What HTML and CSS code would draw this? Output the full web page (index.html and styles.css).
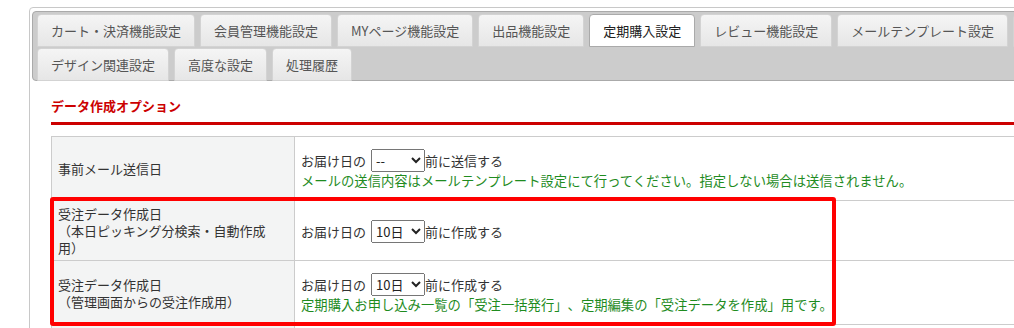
FILE: index.html
```html
<!DOCTYPE html>
<html lang="ja">
<head>
<meta charset="utf-8">
<title>定期購入設定</title>
<link rel="stylesheet" href="styles.css">
</head>
<body>
<div class="tabs">
  <ul class="nav">
    <li>カート・決済機能設定</li>
    <li>会員管理機能設定</li>
    <li>MYページ機能設定</li>
    <li>出品機能設定</li>
    <li class="active">定期購入設定</li>
    <li>レビュー機能設定</li>
    <li>メールテンプレート設定</li>
    <li>ポイント機能設定</li>
    <li>デザイン関連設定</li>
    <li>高度な設定</li>
    <li>処理履歴</li>
  </ul>
  <div class="panel">
    <h3 class="sec-title">データ作成オプション</h3>
    <div class="tbl-wrap">
      <table class="form">
        <colgroup><col class="c1"><col class="c2"></colgroup>
        <tr>
          <th>事前メール送信日</th>
          <td>
            <div class="line">お届け日の<select class="sel wide"><option>--</option></select>前に送信する</div>
            <div class="note">メールの送信内容はメールテンプレート設定にて行ってください。指定しない場合は送信されません。</div>
          </td>
        </tr>
        <tr>
          <th>受注データ作成日<br>（本日ピッキング分検索・自動作成用）</th>
          <td>
            <div class="line">お届け日の<select class="sel"><option>10日</option></select>前に作成する</div>
          </td>
        </tr>
        <tr>
          <th>受注データ作成日<br>（管理画面からの受注作成用）</th>
          <td>
            <div class="line">お届け日の<select class="sel"><option>10日</option></select>前に作成する</div>
            <div class="note">定期購入お申し込み一覧の「受注一括発行」、定期編集の「受注データを作成」用です。</div>
          </td>
        </tr>
        <tr class="spacer">
          <th></th>
          <td></td>
        </tr>
      </table>
      <div class="highlight"></div>
    </div>
  </div>
</div>
</body>
</html>
```

FILE: styles.css
```css
html, body {
  margin: 0;
  padding: 0;
  background: #fff;
  overflow: hidden;
}
body {
  font-family: "Noto Sans CJK JP", "Noto Sans", sans-serif;
  font-size: 13px;
  color: #333;
  text-spacing-trim: space-all;
}
.tabs {
  margin: 7px 0 0 29px;
  width: 1220px;
  min-height: 400px;
  border: 1px solid #c8c8c8;
  border-radius: 4px;
  padding: 3px 2px;
  background: #fff;
}
.nav {
  list-style: none;
  margin: 0;
  padding: 2px 4px 0;
  display: flex;
  flex-wrap: wrap;
  gap: 2px 5px;
  background: #ccc;
  border: 1px solid #aaa;
  border-radius: 4px;
}
.nav li {
  border: 1px solid #d3d3d3;
  border-radius: 4px 4px 0 0;
  background: linear-gradient(#f5f5f5, #e6e6e6);
  padding: 6px 13px;
  line-height: 19px;
  color: #555;
  margin-bottom: -1px;
  white-space: nowrap;
}
.nav li.active {
  background: #fff;
  border-color: #aaa;
  color: #212121;
}
.panel {
  padding: 0 0 0 19px;
}
.sec-title {
  margin: 15px 0 0;
  padding: 0 0 7px;
  font-size: 13px;
  line-height: 19px;
  font-weight: bold;
  color: #c00;
  border-bottom: 3px solid #c00;
}
.tbl-wrap {
  position: relative;
  margin-top: 11px;
}
.form {
  border-collapse: collapse;
  table-layout: fixed;
  width: 1180px;
  border: 1px solid #ccc;
}
.c1 { width: 243px; }
.form th, .form td {
  border: 1px solid #ccc;
  vertical-align: middle;
  text-align: left;
}
.form th {
  background: #f3f4f4;
  font-weight: normal;
  line-height: 17px;
  padding: 4px 24px 4px 6px;
  color: #333;
}
.form td {
  padding: 12px 6px 11px;
  line-height: 17px;
  background: #fff;
}
.line {
  display: flex;
  align-items: center;
  height: 23px;
  white-space: nowrap;
}
.sel {
  width: 54px;
  height: 23px;
  margin: 0 0 0 5px;
  font-family: "Noto Sans CJK JP", sans-serif;
  font-size: 13px;
  color: #222;
}
.note {
  color: #1f8c1f;
  font-size: 13.33px;
  white-space: nowrap;
}
.spacer th, .spacer td {
  height: 40px;
}
.highlight {
  position: absolute;
  left: -1px;
  top: 61px;
  width: 778px;
  height: 121px;
  border: 4px solid #f00;
  border-radius: 3px;
  pointer-events: none;
}
```
